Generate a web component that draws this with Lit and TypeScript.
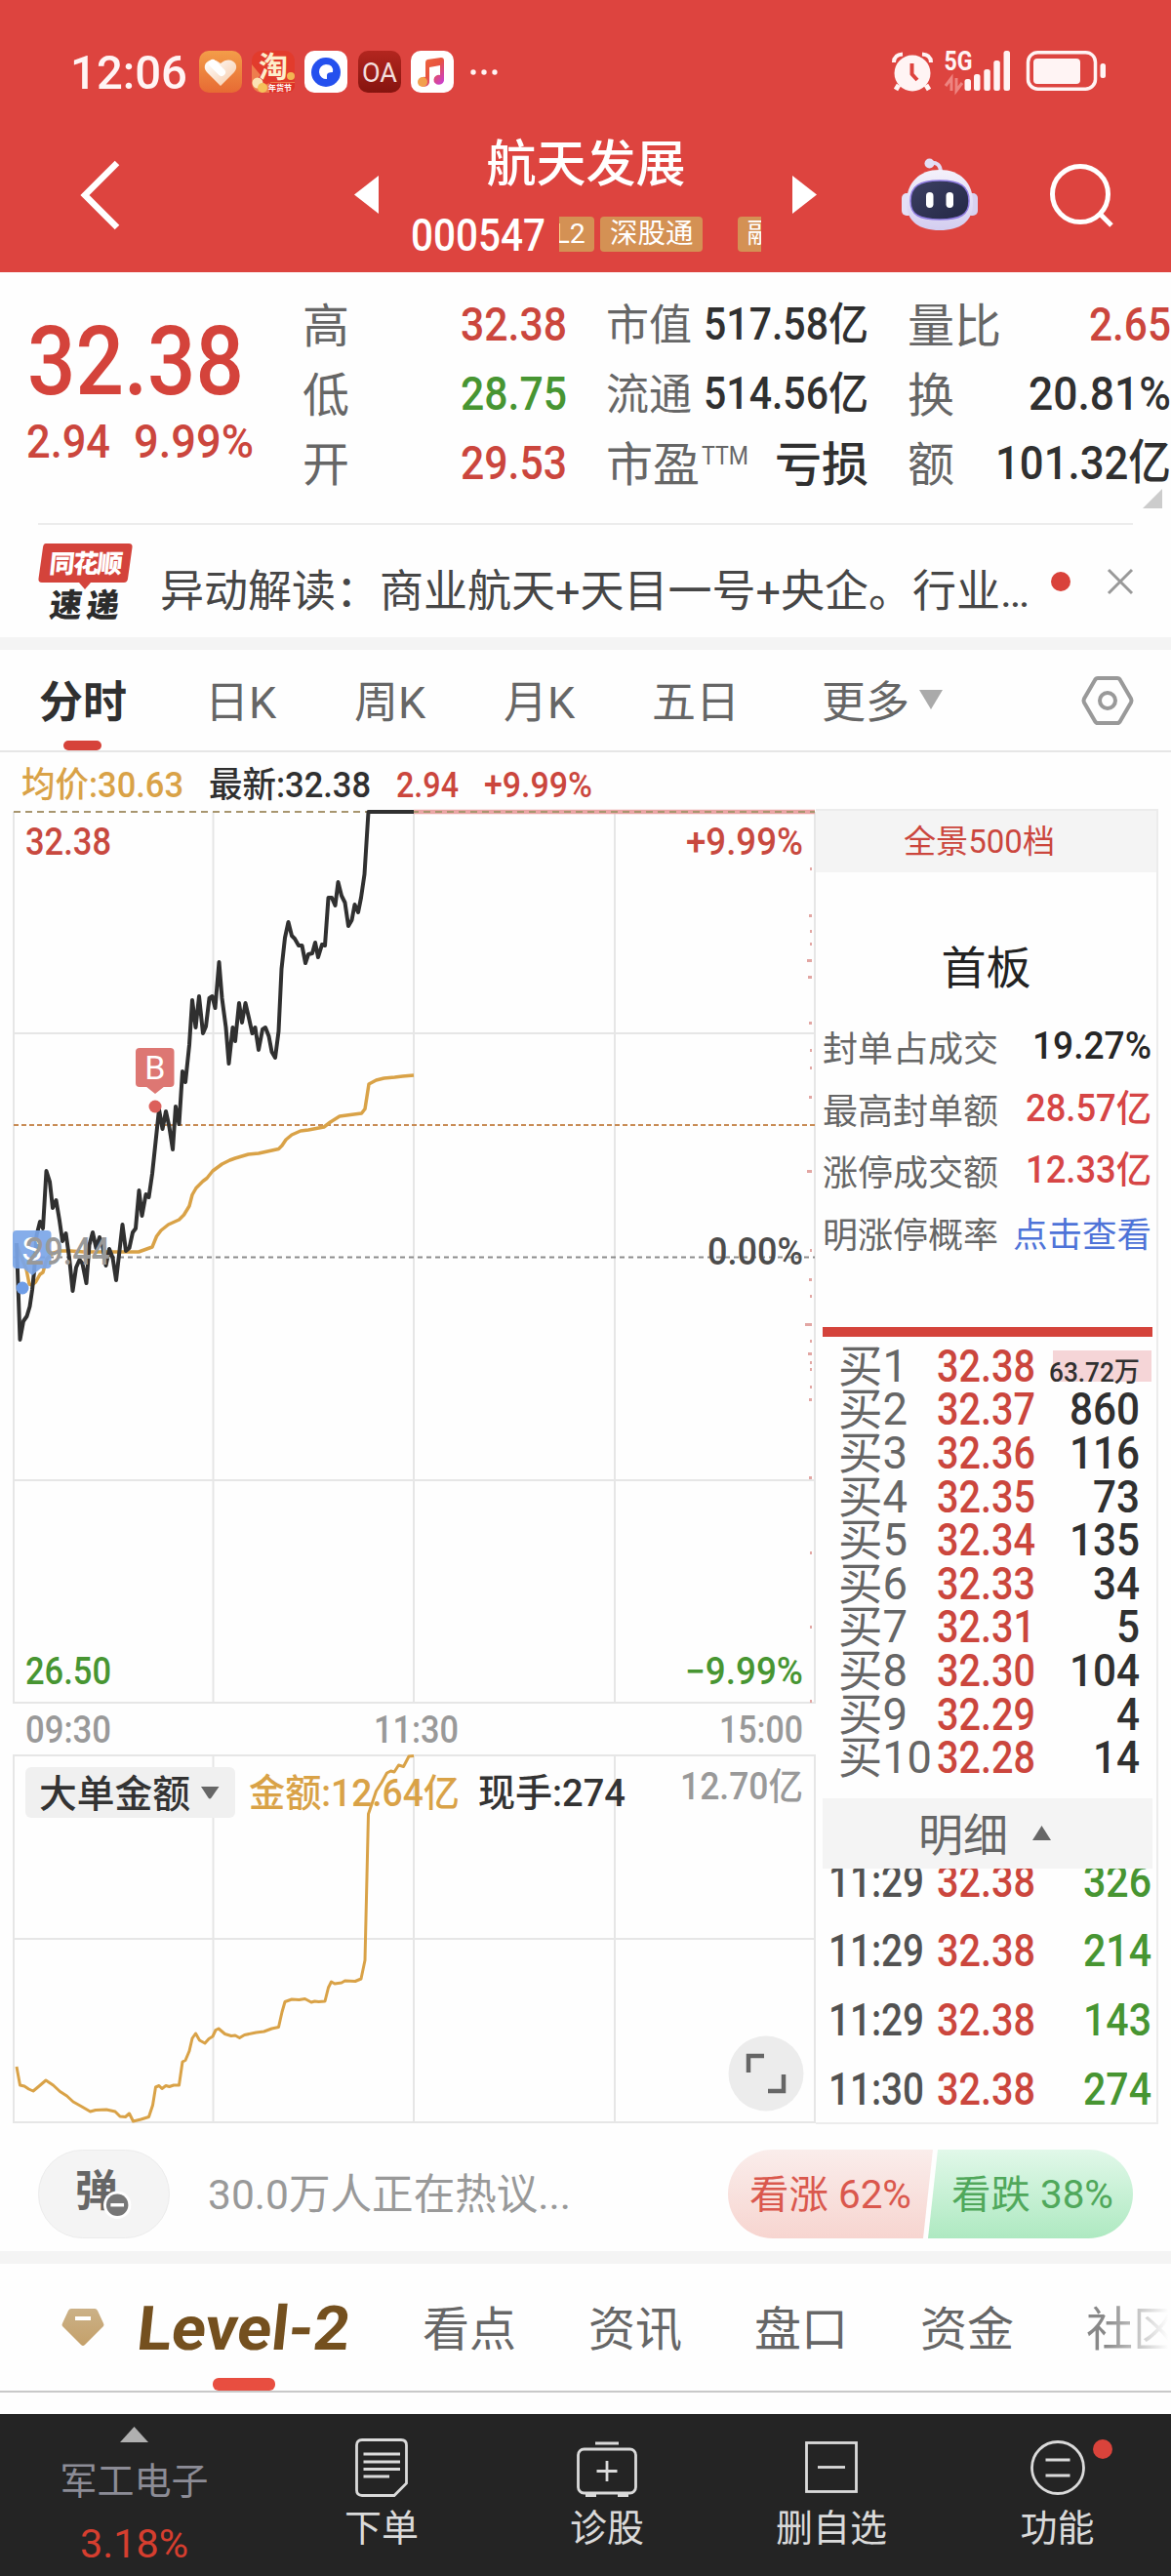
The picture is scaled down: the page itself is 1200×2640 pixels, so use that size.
import { LitElement, html, svg, css } from 'lit';
import { customElement, property } from 'lit/decorators.js';
import { classMap } from 'lit/directives/class-map.js';

const baseStyles = css`
  :host {
    display: block;
    font-family: Roboto, 'Noto Sans CJK SC', sans-serif;
    box-sizing: border-box;
  }
  *, *::before, *::after {
    box-sizing: border-box;
  }
  svg {
    display: block;
    flex: none;
    overflow: visible;
  }
  .fit {
    fill: currentColor;
    font-weight: 500;
  }
  .thin {
    font-weight: 400;
  }
  .red {
    color: #cb463d;
  }
  .green {
    color: #479532;
  }
`;

// condensed text: squeezed to the given width
const fit = (text: string, w: number, size: number, cls = '') => html`
  <svg class="fit ${cls}" width=${w} height=${size}>
    <text x="0" y=${size * 0.85} font-size=${size} textLength=${w} lengthAdjust="spacingAndGlyphs">${text}</text>
  </svg>
`;

const PRICE = `17,1274 20.5,1373 24,1354 27.5,1349 30.5,1339 33,1322 35,1303 37.5,1266 41,1252 44,1259 47.5,1200
  51,1211 54,1238 57.5,1230 61,1251 64,1272 67.5,1264 71,1289 74.5,1323 78,1299 81.5,1291 84.5,1295 88.5,1315
  91.5,1276 95,1263 98.5,1279 102,1268 105,1276 108.5,1297 112,1280 115.5,1289 119,1312 122,1286 125.5,1255
  129,1282 132.5,1279 136,1263 139,1259 142.5,1220 145.5,1246 149.5,1224 152.5,1227 156,1203 163,1137 166.5,1157
  170,1139 173.5,1155 177,1178 180,1134 183.5,1152 187,1098 190,1109 194,1071 197,1025 200.5,1053 204,1021
  208,1059 211,1052 214.5,1023 217.5,1021 220.5,1033 224.5,986 227.5,1023 231.5,1053 234.5,1090 238.5,1053
  241,1067 245,1028 248,1048 251.5,1028 255,1043 258.5,1059 261.5,1053 265,1076 269,1055 272,1053 275.5,1062
  278.5,1078 282,1084 285.5,1057 288.5,993 292,961 295.5,945 299,959 302,962 306,969 309.5,969 313,987 316,978
  320,977 323,966 326,981 330,968 333,969 336.5,920 340,920 343.5,928 346.5,904 350,918 353.5,925 357,949
  360.5,943 363.5,927 367,935 370,920 373.5,896 377.5,832 424,832`;

const AVERAGE = `17,1276 27,1301 30,1316 33,1317 36.5,1314 41,1306 44,1304 48,1290 53.5,1284.5 61.5,1282 72,1282
  86,1283 142,1283 156,1278 160.5,1267 165,1261 172.5,1255 183.5,1250 188.5,1245 194,1236 197,1224.5 201,1217.5
  208,1210.5 212,1207.5 218,1200 227.5,1193 235.5,1189 241,1187 254.5,1183 265,1182 285.5,1177.5 289,1174
  293,1168 299,1163 308,1159 316,1158 332,1155 338.5,1150 348,1144 359,1142.5 370.5,1141 374,1136.5 378,1111
  385.5,1107 393.5,1105 404.5,1104 412.5,1103 424,1102`;

const AMOUNT = `17,2118 20.5,2137 25,2138 29.5,2141 34,2143 40,2138 47,2132 54.5,2137 61.5,2143.5 68.5,2148 75,2154
  83,2158.5 92.5,2164 98,2162.5 109,2162 118,2164 123,2169 128.5,2169.5 132.5,2166 136.5,2174 144.5,2172
  152.5,2169.5 156.5,2157.5 159.5,2139 163,2137.5 166,2140.5 170,2137.5 173.5,2138.5 178,2137 183.5,2137
  187,2113 190,2111.5 194,2102 197,2089 200.5,2084 204.5,2091 210,2094 214,2089.5 218,2087 221,2080.5 224,2079
  230.5,2084.5 237,2086.5 241,2086 245.5,2088.5 250.5,2085.5 262.5,2083 270.5,2082 278.5,2079 285.5,2077.5
  289,2062 292,2051.5 299,2049 306.5,2049.5 312.5,2048.5 319,2052 322.5,2051 326.5,2051.5 333,2051 336.5,2037
  339.5,2031 343,2033 350,2032 353.5,2030 364,2030.5 370,2028 374,2009 377.5,1859 381.5,1847.5 385.5,1835.5
  391,1827 396.5,1817 400.5,1815 404,1816 408.5,1809 413.5,1810.5 419,1800 424,1799.5`;

// [y, width] of the traded volume marks along the right edge
const TICKS = [
  [889, 2], [937, 3], [953, 2], [966, 2], [983, 5], [1000, 4], [1047, 3], [1075, 2], [1093, 2], [1123, 3],
  [1199, 5], [1280, 2], [1310, 3], [1327, 2], [1356, 7], [1373, 2], [1386, 4], [1395, 2], [1402, 2], [1420, 2],
  [1433, 3], [1513, 3], [1590, 2], [1666, 2], [1742, 2],
];

@customElement('trend-chart')
export class TrendChart extends LitElement {
  static styles = [
    baseStyles,
    css`
      .grid {
        stroke: #e6e6e6;
        stroke-width: 2;
        fill: none;
      }
      .zero {
        stroke: #8c8c8c;
        stroke-width: 2;
        stroke-dasharray: 5 4;
      }
      .cost {
        stroke: #c88b54;
        stroke-width: 2.2;
        stroke-dasharray: 5 3;
      }
      .cap {
        stroke: #a8966f;
        stroke-width: 1.8;
        stroke-dasharray: 7 5;
      }
      .limit {
        stroke: #eaa5a5;
        stroke-width: 4.5;
      }
      .price, .avg {
        fill: none;
        stroke-width: 4;
        stroke-linejoin: round;
      }
      .price {
        stroke: #303030;
      }
      .avg {
        stroke: #d9a247;
        stroke-width: 3.5;
      }
      .amount {
        stroke-width: 3;
      }
      text {
        font-weight: 500;
      }
      .mark {
        font-size: 34px;
        font-weight: 400;
        fill: #fff;
        text-anchor: middle;
      }
    `,
  ];

  label(text: string, x: number, y: number, w: number, color: string, size = 38) {
    return svg`<text x=${x} y=${y + size * 0.355} font-size=${size} textLength=${w}
      lengthAdjust="spacingAndGlyphs" fill=${color}>${text}</text>`;
  }

  render() {
    return html`
      <svg width="836" height="1348" viewBox="0 829 836 1348">
        <path class="grid" d="M14 832V1745H835V832M14 1059H835M14 1517H835M218.500 832V1745M424 832V1745M630 832V1745" />
        <path class="grid" d="M14 1799H835V2175H14ZM14 1987H835M218.500 1799V2175M424 1799V2175M630 1799V2175" />
        <line class="limit" x1="424" y1="832" x2="835" y2="832" />
        <line class="cap" x1="14" y1="832" x2="835" y2="832" />
        <line class="cost" x1="14" y1="1153" x2="835" y2="1153" />
        <line class="zero" x1="14" y1="1288.500" x2="835" y2="1288.500" />
        ${TICKS.map(([y, w]) => svg`<rect x=${832 - w} y=${y} width=${w} height="3" fill="#e2a6a3" />`)}
        <polyline class="avg" points=${AVERAGE} />
        <polyline class="price" points=${PRICE} />

        <rect x="139" y="1074" width="39.500" height="40" rx="4" fill="#dd7773" />
        <path d="M149 1113L159 1121L169 1113Z" fill="#dd7773" />
        <text class="mark" x="158.800" y="1106">B</text>
        <circle cx="159" cy="1134" r="6.500" fill="#dc605b" />
        <g opacity=".92">
          <rect x="13" y="1261" width="39.500" height="39" rx="4" fill="#7ba6e8" />
          <path d="M23 1299L33 1307L43 1299Z" fill="#7ba6e8" />
        </g>
        <text class="mark" x="32.500" y="1292">S</text>
        <circle cx="23" cy="1320" r="6.500" fill="#6f9de6" />

        ${this.label('32.38', 26, 862.5, 88, '#c8493f')}
        ${this.label('+9.99%', 703, 862.5, 120, '#c8493f')}
        ${this.label('29.44', 26, 1283, 87, '#999')}
        ${this.label('0.00%', 725, 1283, 98, '#4c4c4c')}
        ${this.label('26.50', 26, 1713, 88, '#479532')}
        ${this.label('−9.99%', 702, 1713, 121, '#479532')}
        ${this.label('09:30', 26, 1772.5, 88, '#999')}
        ${this.label('11:30', 383, 1772.5, 87, '#999')}
        ${this.label('15:00', 737, 1772.5, 86, '#999')}

        <rect x="26" y="1811" width="215" height="52" rx="6" fill="#f0f0f0" />
        ${this.label('大单金额', 40, 1838, 155, '#333', 39)}
        <path d="M206 1831H224.500L216.500 1842.500Q215 1844.500 213.500 1842.500Z" fill="#666" />
        ${this.label('金额:12.64亿', 255, 1837, 216, '#d9a247', 39)}
        ${this.label('现手:274', 490, 1837, 151, '#333', 39)}
        ${this.label('12.70亿', 697, 1831, 126, '#999', 38)}
        <polyline class="avg amount" points=${AMOUNT} />

        <circle cx="785" cy="2125" r="38.500" fill="#ececec" />
        <path d="M767 2124V2107H783M803 2126V2143H787" fill="none" stroke="#666" stroke-width="4.500" />
      </svg>
    `;
  }
}

@customElement('order-book')
export class OrderBook extends LitElement {
  static styles = [
    baseStyles,
    css`
      :host {
        width: 351px;
        height: 1348px;
        border: 2px solid #ececec;
        border-left: none;
        display: flex;
        flex-direction: column;
      }
      .full {
        height: 63px;
        background: #f4f4f4;
        display: flex;
        justify-content: center;
        align-items: center;
        padding-right: 15px;
      }
      h3 {
        margin: 65px 15px 0 0;
        padding-left: 15px;
        height: 64px;
        line-height: 66px;
        font-size: 46px;
        font-weight: 400;
        color: #222;
        text-align: center;
      }
      .stats {
        padding: 17px 5px 0 7px;
      }
      .stat {
        height: 63.7px;
        display: flex;
        align-items: center;
        justify-content: space-between;
        font-size: 36px;
        color: #666;
      }
      .dark {
        color: #262626;
      }
      .up {
        color: #d64545;
      }
      .link {
        color: #4e73d8;
        font-size: 35.5px;
      }
      .bar {
        height: 10px;
        margin: 65px 4px 0 7px;
        background: #d4433b;
      }
      .bids {
        margin: 7px 4px 0 7px;
      }
      .bid {
        height: 44.6px;
        display: grid;
        grid-template-columns: 117px 119px 101px;
        align-items: center;
      }
      .bid > :first-child {
        margin-left: 16px;
        color: #666;
      }
      .vol {
        display: flex;
        align-items: center;
        justify-content: flex-end;
        height: 100%;
        padding-right: 12px;
        color: #303030;
      }
      .first {
        height: 32px;
        padding-top: 12px;
        background: #f5d5d7;
      }
      .detail {
        flex: none;
        height: 72px;
        margin: 20px 4px 0 7px;
        padding-left: 98px;
        background: #f4f4f4;
        color: #666;
        font-size: 46px;
        display: flex;
        align-items: center;
        gap: 25px;
      }
      .detail span {
        margin-top: -3px;
      }
      .trades {
        flex: 1;
        overflow: hidden;
        margin: 0 5px 0 13px;
      }
      .trade {
        height: 71px;
        display: grid;
        grid-template-columns: 111px 119px 1fr;
        align-items: center;
        color: #525252;
      }
      .trade:first-child {
        margin-top: -22px;
      }
      .trade .fit:last-child {
        justify-self: end;
      }
    `,
  ];

  bids = [
    ['32.38', '63.72万'], ['32.37', '860'], ['32.36', '116'], ['32.35', '73'], ['32.34', '135'],
    ['32.33', '34'], ['32.31', '5'], ['32.30', '104'], ['32.29', '4'], ['32.28', '14'],
  ];

  trades = [['11:29', '326'], ['11:29', '214'], ['11:29', '143'], ['11:30', '274']];

  render() {
    return html`
      <div class="full red">${fit('全景500档', 155, 33, 'thin')}</div>
      <h3>首板</h3>
      <div class="stats">
        <div class="stat"><span>封单占成交</span><span class="dark">${fit('19.27%', 122, 38)}</span></div>
        <div class="stat"><span>最高封单额</span><span class="up">${fit('28.57亿', 129, 38)}</span></div>
        <div class="stat"><span>涨停成交额</span><span class="up">${fit('12.33亿', 129, 38)}</span></div>
        <div class="stat"><span>明涨停概率</span><span class="link">点击查看</span></div>
      </div>
      <div class="bar"></div>
      <div class="bids">
        ${this.bids.map(([price, vol], i) => html`
          <div class="bid">
            ${fit(`买${i + 1}`, 46 + 25 * String(i + 1).length, 46, 'thin')}
            <span class="red">${fit(price, 101, 46)}</span>
            <span class=${classMap({ vol: true, first: i === 0 })}>
              ${i === 0 ? fit(vol, 93, 28) : fit(vol, vol.length * 24, 46)}
            </span>
          </div>
        `)}
      </div>
      <div class="detail">
        <span>明细</span>
        <svg width="19" height="15" viewBox="0 0 19 15"><path d="M9.500 0L19 15H0Z" fill="#666" /></svg>
      </div>
      <div class="trades">
        ${this.trades.map(([time, vol]) => html`
          <div class="trade">
            ${fit(time, 98, 46)}
            ${fit('32.38', 101, 46, 'red')}
            ${fit(vol, 70, 46, 'green')}
          </div>
        `)}
      </div>
    `;
  }
}

@customElement('app-status')
export class AppStatus extends LitElement {
  static styles = [
    baseStyles,
    css`
      :host {
        height: 120px;
        padding: 0 67px 0 72px;
        color: #fff4f4;
      }
      .row {
        height: 147px;
        display: flex;
        align-items: center;
      }
      .apps {
        display: flex;
        gap: 10.2px;
        margin-left: 12px;
      }
      .dots {
        margin-left: 17px;
      }
      .right {
        margin-left: auto;
      }
    `,
  ];

  render() {
    return html`
      <div class="row">
        ${fit('12:06', 120, 49)}
        <div class="apps">
          <svg width="44" height="43" viewBox="0 0 44 43">
            <defs>
              <linearGradient id="o" x2="0" y2="1"><stop stop-color="#f39d49" /><stop offset="1" stop-color="#e76a33" /></linearGradient>
              <linearGradient id="h" x2="1" y2="1"><stop stop-color="#fff" /><stop offset="1" stop-color="#f6c9a6" /></linearGradient>
            </defs>
            <rect width="44" height="43" rx="10" fill="url(#o)" />
            <path d="M22 36L8 22C1 14 12 4 22 13C32 4 43 14 36 22Z" fill="url(#h)" />
            <path d="M14 13L23 22" stroke="#fff" stroke-width="8" stroke-linecap="round" />
          </svg>
          <svg width="44" height="43" viewBox="0 0 44 43">
            <rect width="44" height="43" rx="10" fill="#e23b2c" />
            <path d="M0 14L9 25L4 30L14 35L20 32H44V33A10 10 0 0 1 34 43H10A10 10 0 0 1 0 33Z" fill="#ee7d4d" />
            <circle cx="6" cy="33" r="5.500" fill="#fbe3b4" />
            <circle cx="11" cy="38" r="5" fill="#f5c15a" />
            <circle cx="40" cy="26" r="4" fill="#f3b653" />
            <path d="M18 33H44V37Q42 43 34 43H18Z" fill="#de3328" />
            <text x="7" y="27" font-size="30" font-weight="700" fill="#fdeecb">淘</text>
            <text x="17" y="41" font-size="8" font-weight="700" fill="#fff">年货节</text>
          </svg>
          <svg width="44" height="43" viewBox="0 0 44 43">
            <rect width="44" height="43" rx="10" fill="#fff" />
            <circle cx="22" cy="22" r="15" fill="#2450ee" />
            <path d="M22 14A7.500 7.500 0 1 0 23 29V25Q23 22 29 22Q30 14 22 14Z" fill="#fff" />
          </svg>
          <svg width="44" height="43" viewBox="0 0 44 43">
            <defs><linearGradient id="oa" x2="0" y2="1"><stop stop-color="#b3261f" /><stop offset="1" stop-color="#85140f" /></linearGradient></defs>
            <rect width="44" height="43" rx="10" fill="url(#oa)" />
            <text x="4" y="31.500" font-size="28" font-weight="400" fill="#f3dedc" textLength="36" lengthAdjust="spacingAndGlyphs">OA</text>
          </svg>
          <svg width="44" height="43" viewBox="0 0 44 43">
            <defs>
              <linearGradient id="m" x2="1" y2="1"><stop stop-color="#ee6a3c" /><stop offset=".5" stop-color="#e8533f" /><stop offset="1" stop-color="#c43bf0" /></linearGradient>
            </defs>
            <rect width="44" height="43" rx="10" fill="#fff" />
            <path d="M17 9L31 7Q34 7 34 10V29A5.300 5 0 1 1 30 25V15L19 17V31A5.300 5 0 1 1 15 27V12Q15 9.500 17 9Z" fill="url(#m)" />
            <circle cx="12" cy="32" r="5" fill="#f2a04e" />
          </svg>
        </div>
        <svg class="dots" width="28" height="6" fill="#fff4f4">
          <circle cx="3" cy="3" r="2.700" /><circle cx="14" cy="3" r="2.700" /><circle cx="25" cy="3" r="2.700" />
        </svg>
        <svg class="right" width="219" height="43" viewBox="914 52 219 43" fill="#fff4f4">
          <circle cx="935" cy="75" r="18.500" />
          <path d="M921 87L918 92M949 87L952 92" stroke="#fff4f4" stroke-width="5" />
          <path d="M916 64Q916 56 925 55.500M945 55.500Q954 56 954 64" stroke="#fff4f4" stroke-width="4" fill="none" />
          <path d="M934.500 65V76L940 82" stroke="#dd443f" stroke-width="4" fill="none" stroke-linejoin="round" />
          <text x="967.500" y="72" font-size="28" font-weight="700" textLength="29" lengthAdjust="spacingAndGlyphs">5G</text>
          <path d="M969 88L975 80V93M986 85L980 93V80" stroke="#ee8480" stroke-width="3" fill="none" />
          <rect x="988.500" y="81" width="6.500" height="12" rx="2.500" />
          <rect x="998" y="76" width="6.500" height="17" rx="2.500" />
          <rect x="1008.300" y="71" width="6.500" height="22" rx="2.500" />
          <rect x="1018.300" y="62" width="6.500" height="31" rx="2.500" />
          <rect x="1028.500" y="52" width="6.500" height="41" rx="2.500" />
          <rect x="1053.500" y="53.700" width="69" height="37.500" rx="10" fill="none" stroke="#fff4f4" stroke-width="3.500" />
          <rect x="1059" y="60" width="48" height="26" rx="4" />
          <rect x="1127.500" y="65" width="5.500" height="15" rx="2.500" />
        </svg>
      </div>
    `;
  }
}

@customElement('app-root')
export class AppRoot extends LitElement {
  static styles = [
    baseStyles,
    css`
      :host {
        width: 1200px;
        height: 2640px;
        overflow: hidden;
        background: #fefefe;
      }
      .header {
        height: 279px;
        background: #dd443f;
        color: #fff;
      }
      .nav {
        height: 159px;
        display: grid;
        grid-template-columns: 340px 71px 379px 68px 210px 80px;
        align-items: center;
        justify-items: center;
      }
      .back {
        justify-self: start;
        margin-left: 84px;
      }
      .stock {
        justify-self: stretch;
        padding: 9px 0 0 10px;
      }
      .name {
        height: 72px;
        margin-left: -10px;
        line-height: 73px;
        font-size: 51px;
        font-weight: 500;
        text-align: center;
      }
      .code {
        height: 72px;
        display: flex;
        align-items: center;
        gap: 14px;
      }
      .tags {
        width: 207px;
        overflow: hidden;
        display: flex;
      }
      .tag {
        flex: none;
        height: 36px;
        line-height: 36px;
        padding: 0 9.5px;
        border-radius: 4px;
        font-size: 28.5px;
        background: #d49154;
        color: #fff;
      }
      .tag:nth-child(1) {
        margin-left: -14px;
      }
      .tag:nth-child(2) {
        margin: 0 36px 0 6px;
      }

      .quote {
        height: 257px;
        display: flex;
        position: relative;
      }
      .last {
        width: 310px;
        padding: 41px 0 0 28px;
        color: #d4433b;
      }
      .change {
        display: flex;
        gap: 24px;
        margin: 8px 0 0 -1px;
      }
      .metrics {
        display: grid;
        grid-template-columns: 271px 269px 270px;
        grid-auto-rows: 71px;
        column-gap: 40px;
        padding-top: 17px;
        align-items: center;
      }
      .metric {
        display: flex;
        align-items: center;
        justify-content: space-between;
        color: #303030;
      }
      .metric label {
        margin-top: -4px;
        font-size: 48px;
        color: #666;
        display: flex;
        align-items: center;
        gap: 2px;
        white-space: nowrap;
      }
      .metric .small {
        font-size: 44px;
      }
      .metric label .fit {
        margin-top: -10px;
      }
      .metric strong {
        margin-top: -4px;
        font-size: 48px;
        font-weight: 500;
      }
      .corner {
        position: absolute;
        right: 9px;
        bottom: 15px;
        border-left: 20px solid transparent;
        border-bottom: 20px solid #ccc;
      }

      .news {
        height: 117px;
        margin: 0 39px;
        border-top: 2px solid #ececec;
        display: flex;
        align-items: center;
        color: #464646;
      }
      .news .title {
        margin: 22px 22px 0 28px;
      }
      .dot {
        width: 20px;
        height: 20px;
        border-radius: 50%;
        background: #d9423b;
      }
      .news .close {
        margin-left: auto;
      }
      .band {
        height: 13px;
        background: #f4f4f4;
      }

      .tabs {
        height: 105px;
        border-bottom: 2px solid #e6e6e6;
        display: grid;
        grid-template-columns: 170px 153px 153px 152px 174px 267px auto;
        align-items: center;
        padding-left: 40px;
        font-size: 45px;
        color: #666;
      }
      .tabs span {
        display: flex;
        align-items: center;
        gap: 10px;
        height: 100%;
        padding-bottom: 2px;
      }
      .tabs .on {
        position: relative;
        font-weight: 700;
        color: #303030;
      }
      .tabs .on::after {
        content: '';
        position: absolute;
        left: 25px;
        bottom: 0;
        width: 39px;
        height: 10px;
        border-radius: 5px;
        background: #d6433a;
      }
      .info {
        height: 58px;
        padding: 7px 0 0 22px;
        display: flex;
        align-items: center;
        gap: 26px;
        color: #303030;
      }
      .gold {
        color: #d9a247;
      }
      .main {
        display: flex;
      }

      .talk {
        height: 130px;
        padding: 13px 39px 0;
        display: flex;
        align-items: center;
        color: #999;
      }
      .barrage {
        width: 135px;
        height: 91px;
        margin-right: 39px;
        border: 1px solid #ececec;
        border-radius: 46px;
        background: #f4f4f4;
      }
      .vote {
        display: flex;
        margin-left: auto;
        height: 91px;
      }
      .bull, .bear {
        height: 91px;
        display: flex;
        align-items: center;
      }
      .bull {
        width: 210.5px;
        padding-left: 22px;
        border-radius: 46px 0 0 46px;
        background: linear-gradient(#faedeb, #f7d5d0);
        color: #da584d;
        clip-path: polygon(0 0, 100% 0, calc(100% - 10px) 100%, 0 100%);
      }
      .bear {
        width: 210px;
        margin-left: -5px;
        padding-left: 24px;
        border-radius: 0 46px 46px 0;
        background: linear-gradient(#e1f8e9, #aee9c1);
        color: #50a85b;
        clip-path: polygon(10px 0, 100% 0, 100% 100%, 0 100%);
      }

      .sections {
        height: 132px;
        border-bottom: 2px solid #c9c9c9;
        display: flex;
        align-items: center;
        padding-left: 63px;
        font-size: 48px;
        color: #666;
        overflow: hidden;
      }
      .sections span {
        flex: none;
        margin: -5px 74px 0 0;
      }
      .sections .level {
        position: relative;
        height: 100%;
        display: flex;
        align-items: center;
        margin: 0 74px 0 34px;
        color: #74501f;
      }
      .level .fit {
        font-weight: 700;
        transform: skewX(-6deg);
      }
      .level::after {
        content: '';
        position: absolute;
        left: 77px;
        bottom: 0;
        width: 64px;
        height: 13px;
        border-radius: 6px;
        background: #e84e40;
      }
      .sections .fade {
        margin: -5px 0 0;
        background: linear-gradient(90deg, #888 20%, #fefefe 88%);
        background-clip: text;
        -webkit-background-clip: text;
        color: transparent;
      }

      .footer {
        height: 166px;
        margin-top: 22px;
        background: #242424;
        color: #dadada;
        display: grid;
        grid-template-columns: 275px 232px 230px 230px 233px;
        font-size: 38px;
      }
      .item {
        display: flex;
        flex-direction: column;
        align-items: center;
        padding-top: 25px;
      }
      .item p {
        margin: 0;
        height: 64px;
        line-height: 65px;
      }
      .sector {
        padding-top: 13px;
        color: #8c8c96;
      }
      .sector p {
        height: 64px;
        line-height: 81px;
      }
      .sector .fit {
        margin-top: 19px;
        color: #d63e2f;
      }
    `,
  ];

  @property({ type: Array }) metrics = [
    ['高', '32.38', 109, 'red'], ['市值', '517.58亿', 169, ''], ['量比', '2.65', 84, 'red'],
    ['低', '28.75', 109, 'green'], ['流通', '514.56亿', 169, ''], ['换', '20.81%', 146, ''],
    ['开', '29.53', 109, 'red'], ['市盈', '亏损', 0, ''], ['额', '101.32亿', 180, ''],
  ] as [string, string, number, string][];

  renderMetric([name, value, w, cls]: [string, string, number, string], i: number) {
    const wide = i % 3 === 1 && w > 0;
    return html`
      <div class="metric">
        <label class=${wide ? 'small' : ''}>${name}${w ? '' : fit('TTM', 48, 26, 'thin')}</label>
        ${w ? fit(value, w, wide ? 46 : 49, cls) : html`<strong>${value}</strong>`}
      </div>
    `;
  }

  render() {
    return html`
      <div class="header">
        <app-status></app-status>
        <div class="nav">
          <svg class="back" width="38" height="70" viewBox="0 0 38 70">
            <path d="M36 2L3 35L36 68" fill="none" stroke="#fff" stroke-width="6.500" />
          </svg>
          <svg width="25" height="39" viewBox="0 0 25 39"><path d="M25 0V39L0 19.500Z" fill="#fff" /></svg>
          <div class="stock">
            <div class="name">航天发展</div>
            <div class="code">
              ${fit('000547', 138, 47)}
              <div class="tags"><span class="tag">L2</span><span class="tag">深股通</span><span class="tag">融资融券</span></div>
            </div>
          </div>
          <svg width="25" height="39" viewBox="0 0 25 39"><path d="M0 0V39L25 19.500Z" fill="#fff" /></svg>
          <svg width="78" height="74" viewBox="0 0 78 74">
            <defs>
              <linearGradient id="head" x2="0" y2="1"><stop stop-color="#f4f1fb" /><stop offset="1" stop-color="#d3cdf0" /></linearGradient>
              <linearGradient id="face" x2="1" y2="1"><stop stop-color="#3d4063" /><stop offset="1" stop-color="#232745" /></linearGradient>
            </defs>
            <path d="M28 4Q40 2 40 14" fill="none" stroke="#e3dcf5" stroke-width="4" />
            <circle cx="28.500" cy="4.500" r="5" fill="#e3dff6" />
            <rect x="0" y="35" width="12" height="23" rx="5" fill="#e4e0f6" />
            <rect x="66" y="35" width="12" height="23" rx="5" fill="#d8d2f0" />
            <path d="M39 11C60 11 73 24 73 45C73 64 60 73 39 73C18 73 5 64 5 45C5 24 18 11 39 11Z" fill="url(#head)" />
            <path d="M39 22C60 22 69 28 69 43C69 57 60 62 39 62C18 62 9 57 9 43C9 28 18 22 39 22Z" fill="url(#face)" stroke="#8f7be0" stroke-width="1.500" />
            <rect x="25" y="34" width="7.500" height="16" rx="3.700" fill="#fff" />
            <rect x="45.500" y="34" width="7.500" height="16" rx="3.700" fill="#fff" />
          </svg>
          <svg width="64" height="64" viewBox="0 0 64 64" fill="none" stroke="#fff" stroke-width="5">
            <circle cx="31" cy="31" r="28.500" /><path d="M51 51L63 63" />
          </svg>
        </div>
      </div>

      <div class="quote">
        <div class="last">
          ${fit('32.38', 222, 99)}
          <div class="change">${fit('2.94', 86, 49, 'red')}${fit('9.99%', 123, 49, 'red')}</div>
        </div>
        <div class="metrics">${this.metrics.map((m, i) => this.renderMetric(m, i))}</div>
        <i class="corner"></i>
      </div>

      <div class="news">
        <svg width="97" height="78" viewBox="0 0 97 78">
          <path d="M8 0H93Q97 0 96.500 4L92 36Q91.500 40 88 40H54L48 47L42 40H4Q0 40 .5 36L5 4Q5.500 0 8 0Z" fill="#d4433b" />
          <text x="14" y="30" font-size="26" font-weight="900" fill="#fff" transform="skewX(-6)" textLength="75">同花顺</text>
          <text x="20" y="75" font-size="33" font-weight="900" fill="#2c2c2c" transform="skewX(-7)" textLength="71">速递</text>
        </svg>
        <div class="title">${fit('异动解读：商业航天+天目一号+央企。行业…', 891, 45, 'thin')}</div>
        <div class="dot"></div>
        <svg class="close" width="26" height="26" viewBox="0 0 26 26"><path d="M1 1L25 25M25 1L1 25" stroke="#999" stroke-width="3" /></svg>
      </div>
      <div class="band"></div>

      <div class="tabs">
        <span class="on">分时</span><span>日K</span><span>周K</span><span>月K</span><span>五日</span>
        <span>更多<svg width="24" height="20" viewBox="0 0 24 20"><path d="M0 0H24L12 20Z" fill="#aaa" /></svg></span>
        <svg width="52" height="50" viewBox="0 0 52 50" fill="none" stroke="#999" stroke-width="4">
          <path d="M16 2H36Q38 2 39 4L50 23Q51 25 50 27L39 46Q38 48 36 48H16Q14 48 13 46L2 27Q1 25 2 23L13 4Q14 2 16 2Z" />
          <circle cx="26" cy="25" r="8" />
        </svg>
      </div>
      <div class="info">
        ${fit('均价:30.63', 166, 36, 'gold')}
        ${fit('最新:32.38', 166, 36)}
        ${fit('2.94', 64, 36, 'red')}
        ${fit('+9.99%', 111, 36, 'red')}
      </div>
      <div class="main">
        <trend-chart></trend-chart>
        <order-book></order-book>
      </div>

      <div class="talk">
        <svg class="barrage" viewBox="39 2203 135 91">
          <text x="76" y="2261" font-size="45" font-weight="700" fill="#666">弹</text>
          <circle cx="120.500" cy="2260" r="14.500" fill="#fff" />
          <circle cx="120.500" cy="2260" r="11.500" fill="#777" />
          <path d="M113.500 2260H127.500" stroke="#fff" stroke-width="3.500" />
        </svg>
        ${fit('30.0万人正在热议...', 372, 43, 'thin')}
        <div class="vote">
          <div class="bull">${fit('看涨 62%', 166, 40, 'thin')}</div>
          <div class="bear">${fit('看跌 38%', 166, 40, 'thin')}</div>
        </div>
      </div>
      <div class="band"></div>

      <div class="sections">
        <svg width="44" height="39" viewBox="0 0 44 39">
          <defs><linearGradient id="gem" x2="0" y2="1"><stop stop-color="#cbb187" /><stop offset="1" stop-color="#c4a06a" /></linearGradient></defs>
          <path d="M10 0H34Q36 0 37 2L43 15Q44 17 43 18L24 37Q22 39 20 37L1 18Q0 17 1 15L7 2Q8 0 10 0Z" fill="url(#gem)" />
          <path d="M14 10H30" stroke="#fff" stroke-width="4" />
        </svg>
        <span class="level">${fit('Level-2', 218, 63)}</span>
        <span>看点</span><span>资讯</span><span>盘口</span><span>资金</span><span class="fade">社区</span>
      </div>

      <div class="footer">
        <div class="item sector">
          <svg width="29" height="16" viewBox="0 0 29 16"><path d="M14.500 0L29 16H0Z" fill="#b0b0b0" /></svg>
          <p>军工电子</p>
          ${fit('3.18%', 111, 41, 'thin')}
        </div>
        <div class="item">
          <svg width="54" height="60" viewBox="0 0 54 60" fill="none" stroke="#dadada" stroke-width="2.800">
            <path d="M7 1.500H47Q52.500 1.500 52.500 7V46L40 58.500H7Q1.500 58.500 1.500 53V7Q1.500 1.500 7 1.500Z" />
            <path d="M8.500 16H46M8.500 24H46M8.500 31.500H46M8.500 39H35" />
          </svg>
          <p>下单</p>
        </div>
        <div class="item">
          <svg width="62" height="60" viewBox="0 0 62 60" fill="none" stroke="#dadada" stroke-width="2.800">
            <rect x="1.500" y="11" width="59" height="45" rx="6" />
            <path d="M19 5H43M31 23V44M20.500 33.500H41.500" />
            <path d="M9 58.500H20M42 58.500H53" />
          </svg>
          <p>诊股</p>
        </div>
        <div class="item">
          <svg width="54" height="60" viewBox="0 0 54 60" fill="none" stroke="#dadada" stroke-width="2.800">
            <rect x="1.500" y="4.500" width="51" height="50" /><path d="M13 29.500H41" />
          </svg>
          <p>删自选</p>
        </div>
        <div class="item">
          <svg width="56" height="60" viewBox="0 0 56 60" fill="none" stroke="#dadada" stroke-width="2.800">
            <circle cx="28" cy="30" r="26.500" /><path d="M15.500 22H40.500M15.500 38H40.500" />
            <circle cx="74" cy="11" r="10" fill="#d9433b" stroke="none" />
          </svg>
          <p>功能</p>
        </div>
      </div>
    `;
  }
}
